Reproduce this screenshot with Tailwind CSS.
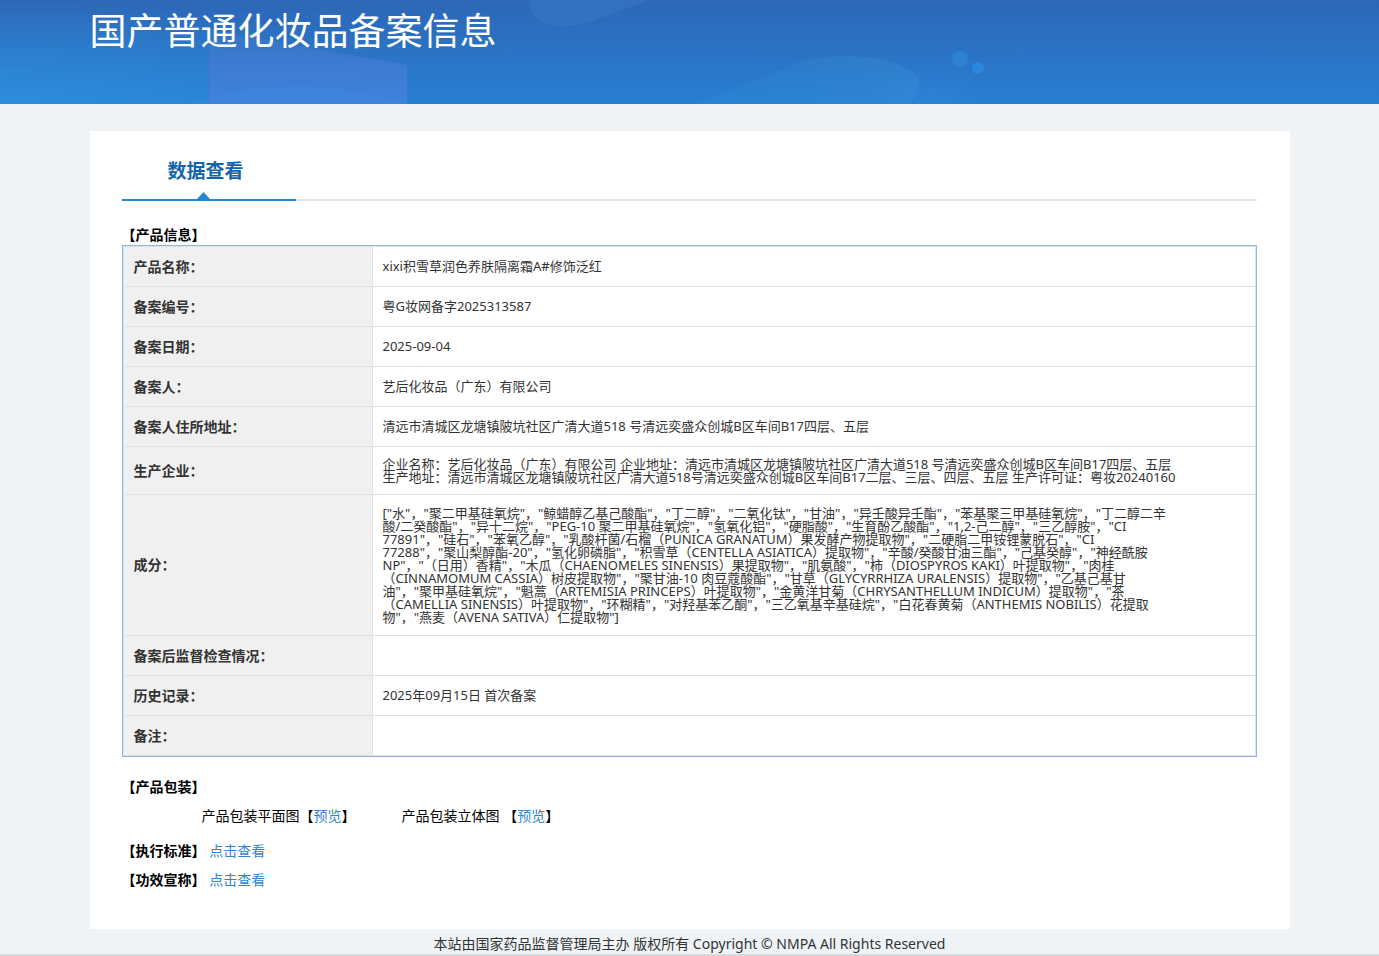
<!DOCTYPE html>
<html lang="zh-CN">
<head>
  <meta charset="UTF-8" />
  <meta name="viewport" content="width=device-width, initial-scale=1" />
  <title>国产普通化妆品备案信息</title>
  <script src="https://cdn.jsdelivr.net/npm/@tailwindcss/browser@4"></script>
  <style>
    body {
      font-family: 'Noto Sans', 'Noto Sans CJK SC', sans-serif;
    }
  </style>
</head>
<body class="bg-[#eff3f6] text-black text-sm">

<header class="relative h-[104px] overflow-hidden bg-linear-to-b from-[#2d67b7] to-[#277fd2]">
  <!-- banner artwork -->
  <svg class="absolute inset-0 w-full h-full" viewBox="0 0 1379 104" preserveAspectRatio="none" aria-hidden="true">
    <defs>
      <radialGradient id="glow" cx="0" cy="1" r="1">
        <stop offset="0" stop-color="#2f92df" stop-opacity="0.7" />
        <stop offset="1" stop-color="#2f92df" stop-opacity="0" />
      </radialGradient>
      <linearGradient id="block" x1="0" y1="0" x2="0" y2="1">
        <stop offset="0" stop-color="#3f78cc" stop-opacity="0.2" />
        <stop offset="0.4" stop-color="#3f7ad0" stop-opacity="0.9" />
        <stop offset="1" stop-color="#3f82dc" />
      </linearGradient>
      <linearGradient id="pill" x1="0" y1="0" x2="1" y2="0">
        <stop offset="0" stop-color="#3a96d8" stop-opacity="0.1" />
        <stop offset="1" stop-color="#3a90d6" stop-opacity="0.35" />
      </linearGradient>
      <radialGradient id="haze">
        <stop offset="0" stop-color="#3385de" stop-opacity="0.5" />
        <stop offset="1" stop-color="#3385de" stop-opacity="0" />
      </radialGradient>
    </defs>
    <rect width="420" height="104" fill="url(#glow)" />
    <path d="M209 30 L407 65 V104 H209 Z" fill="url(#block)" />
    <path d="M189 104 Q290 68 407 104 Z" fill="#3d8ae2" fill-opacity="0.3" />
    <path d="M528 0 C530 30 565 31 595 20 L650 0 Z" fill="#3f80cb" fill-opacity="0.35" />
    <ellipse cx="930" cy="104" rx="55" ry="40" fill="url(#haze)" />
    <path d="M695 104 L795 64 C840 48 905 58 918 78 C920 90 915 98 908 104 Z" fill="url(#pill)" />
    <ellipse cx="960" cy="59" rx="8" ry="8" fill="#2f86d8" fill-opacity="0.7" />
    <ellipse cx="978" cy="68" rx="6" ry="6" fill="#2b88e0" fill-opacity="0.9" />
  </svg>
  <div class="relative max-w-[1200px] mx-auto">
    <h1 class="text-white text-[37px] leading-[62px]">国产普通化妆品备案信息</h1>
  </div>
</header>

<main class="max-w-[1200px] mx-auto mt-[27px] bg-white pl-8 pr-[33px] pt-4 pb-[39px]">
  <div class="flex border-b-2 border-[#e5e5e5]">
    <h2 class="relative w-[174px] h-[54px] -mb-0.5 pl-[46px] border-b-2 border-[#2187d1] text-[19px] leading-12 font-bold text-[#1564ab]">
      数据查看
      <svg class="absolute left-[75px] bottom-0 w-[13px] h-[7px]" viewBox="0 0 13 7" aria-hidden="true"><path d="M6.5 0 L13 7 H0 Z" fill="#2187d1" /></svg>
    </h2>
  </div>

  <h3 class="mt-6 leading-5 font-bold">【产品信息】</h3>

  <div class="border border-[#8fb5e8]">
    <table class="w-full border border-[#e1e1e1] border-collapse text-[13px] leading-[13px] text-[#333]">
      <tbody>
        <tr class="h-10 border-b border-[#e1e1e1]">
          <th class="w-[249px] pl-[10px] bg-[#f0f0f0] border-r border-[#e1e1e1] text-left text-sm font-bold">产品名称：</th>
          <td class="pl-[10px] pr-[54px]">xixi积雪草润色养肤隔离霜A#修饰泛红</td>
        </tr>
        <tr class="h-10 border-b border-[#e1e1e1]">
          <th class="pl-[10px] bg-[#f0f0f0] border-r border-[#e1e1e1] text-left text-sm font-bold">备案编号：</th>
          <td class="pl-[10px] pr-[54px]">粤G妆网备字2025313587</td>
        </tr>
        <tr class="h-10 border-b border-[#e1e1e1]">
          <th class="pl-[10px] bg-[#f0f0f0] border-r border-[#e1e1e1] text-left text-sm font-bold">备案日期：</th>
          <td class="pl-[10px] pr-[54px]">2025-09-04</td>
        </tr>
        <tr class="h-10 border-b border-[#e1e1e1]">
          <th class="pl-[10px] bg-[#f0f0f0] border-r border-[#e1e1e1] text-left text-sm font-bold">备案人：</th>
          <td class="pl-[10px] pr-[54px]">艺后化妆品（广东）有限公司</td>
        </tr>
        <tr class="h-10 border-b border-[#e1e1e1]">
          <th class="pl-[10px] bg-[#f0f0f0] border-r border-[#e1e1e1] text-left text-sm font-bold">备案人住所地址：</th>
          <td class="pl-[10px] pr-[54px]">清远市清城区龙塘镇陂坑社区广清大道518 号清远奕盛众创城B区车间B17四层、五层</td>
        </tr>
        <tr class="h-12 border-b border-[#e1e1e1]">
          <th class="pl-[10px] bg-[#f0f0f0] border-r border-[#e1e1e1] text-left text-sm font-bold">生产企业：</th>
          <td class="pl-[10px] pr-[54px]">企业名称：艺后化妆品（广东）有限公司 企业地址：清远市清城区龙塘镇陂坑社区广清大道518 号清远奕盛众创城B区车间B17四层、五层<br />生产地址：清远市清城区龙塘镇陂坑社区广清大道518号清远奕盛众创城B区车间B17二层、三层、四层、五层 生产许可证：粤妆20240160</td>
        </tr>
        <tr class="h-[141px] border-b border-[#e1e1e1]">
          <th class="pl-[10px] bg-[#f0f0f0] border-r border-[#e1e1e1] text-left text-sm font-bold">成分：</th>
          <td class="pl-[10px] pr-[54px]">
            ["水"，"聚二甲基硅氧烷"，"鲸蜡醇乙基己酸酯"，"丁二醇"，"二氧化钛"，"甘油"，"异壬酸异壬酯"，"苯基聚三甲基硅氧烷"，"丁二醇二辛<br />
            酸/二癸酸酯"，"异十二烷"，"PEG-10 聚二甲基硅氧烷"，"氢氧化铝"，"硬脂酸"，"生育酚乙酸酯"，"1,2-己二醇"，"三乙醇胺"，"CI<br />
            77891"，"硅石"，"苯氧乙醇"，"乳酸杆菌/石榴（PUNICA GRANATUM）果发酵产物提取物"，"二硬脂二甲铵锂蒙脱石"，"CI<br />
            77288"，"聚山梨醇酯-20"，"氢化卵磷脂"，"积雪草（CENTELLA ASIATICA）提取物"，"辛酸/癸酸甘油三酯"，"己基癸醇"，"神经酰胺<br />
            NP"，"（日用）香精"，"木瓜（CHAENOMELES SINENSIS）果提取物"，"肌氨酸"，"柿（DIOSPYROS KAKI）叶提取物"，"肉桂<br />
            （CINNAMOMUM CASSIA）树皮提取物"，"聚甘油-10 肉豆蔻酸酯"，"甘草（GLYCYRRHIZA URALENSIS）提取物"，"乙基己基甘<br />
            油"，"聚甲基硅氧烷"，"魁蒿（ARTEMISIA PRINCEPS）叶提取物"，"金黄洋甘菊（CHRYSANTHELLUM INDICUM）提取物"，"茶<br />
            （CAMELLIA SINENSIS）叶提取物"，"环糊精"，"对羟基苯乙酮"，"三乙氧基辛基硅烷"，"白花春黄菊（ANTHEMIS NOBILIS）花提取<br />
            物"，"燕麦（AVENA SATIVA）仁提取物"]
          </td>
        </tr>
        <tr class="h-10 border-b border-[#e1e1e1]">
          <th class="pl-[10px] bg-[#f0f0f0] border-r border-[#e1e1e1] text-left text-sm font-bold">备案后监督检查情况：</th>
          <td class="pl-[10px] pr-[54px]"></td>
        </tr>
        <tr class="h-10 border-b border-[#e1e1e1]">
          <th class="pl-[10px] bg-[#f0f0f0] border-r border-[#e1e1e1] text-left text-sm font-bold">历史记录：</th>
          <td class="pl-[10px] pr-[54px]">2025年09月15日 首次备案</td>
        </tr>
        <tr class="h-10">
          <th class="pl-[10px] bg-[#f0f0f0] border-r border-[#e1e1e1] text-left text-sm font-bold">备注：</th>
          <td class="pl-[10px] pr-[54px]"></td>
        </tr>
      </tbody>
    </table>
  </div>

  <h3 class="mt-5 leading-5 font-bold">【产品包装】</h3>
  <div class="flex mt-[9px] pl-20 leading-5">
    <p class="w-[200px]">产品包装平面图【<a href="#" class="text-[#2f86d0]">预览</a>】</p>
    <p>产品包装立体图 【<a href="#" class="text-[#2f86d0]">预览</a>】</p>
  </div>
  <p class="mt-[15px] leading-5"><b>【执行标准】</b> <a href="#" class="text-[#2f86d0]">点击查看</a></p>
  <p class="mt-[9px] leading-5"><b>【功效宣称】</b> <a href="#" class="text-[#2f86d0]">点击查看</a></p>
</main>

<footer class="pt-[5px] border-b-2 border-[#d8dadc] text-center leading-5 text-[#333]">
  本站由国家药品监督管理局主办 版权所有 Copyright © NMPA All Rights Reserved
</footer>

</body>
</html>
